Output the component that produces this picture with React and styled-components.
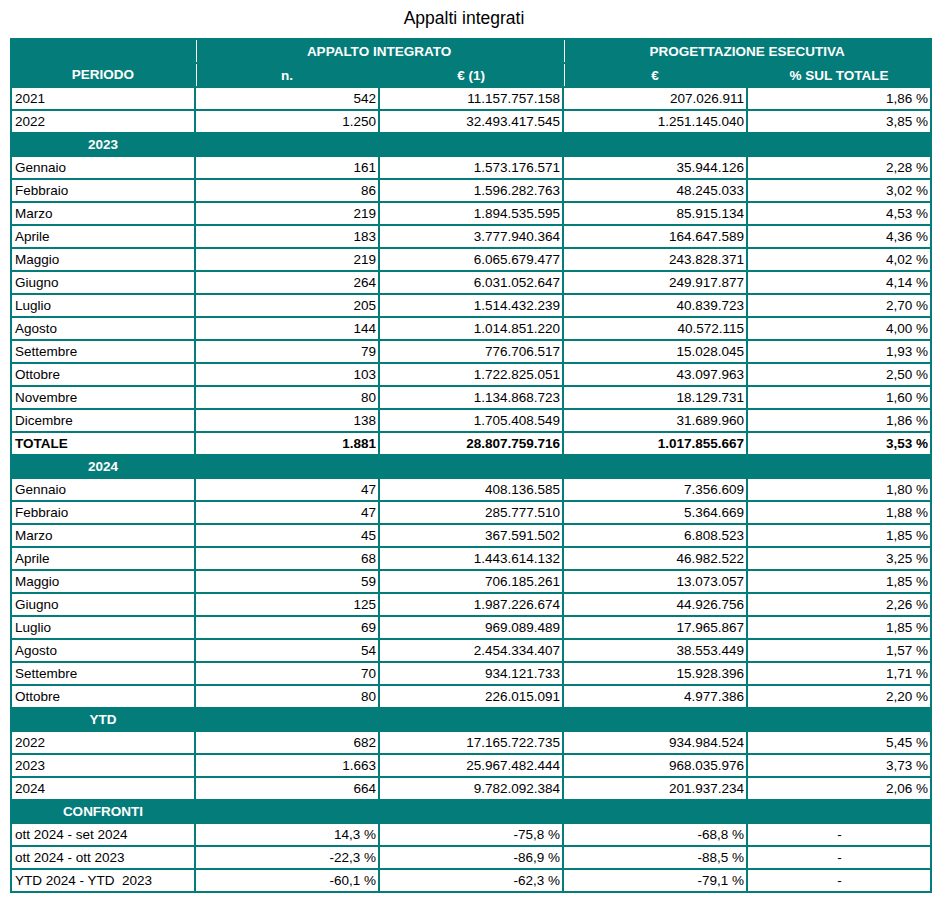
import React from 'react';
import styled, { createGlobalStyle } from 'styled-components';

const teal = '#047c79';

const GlobalStyle = createGlobalStyle`
  body {
    margin: 0;
    background: #fff;
    font-family: "Liberation Sans", Arial, sans-serif;
    color: #000;
  }
`;

const Page = styled.div`
  width: 939px;
  padding: 0 0 0 10px;
  box-sizing: border-box;
`;

const Title = styled.div`
  width: 908px;
  height: 38px;
  line-height: 36px;
  text-align: center;
  font-size: 17.5px;
`;

const Table = styled.table`
  border-collapse: collapse;
  table-layout: fixed;
  width: 922px;
  font-size: 13.5px;
`;

const HeadCell = styled.th`
  background: ${teal};
  color: #fff;
  font-weight: bold;
  font-size: 13.5px;
  height: 22px;
  padding: 0;
  text-align: center;
  vertical-align: ${({ $bottom }) => ($bottom ? 'bottom' : 'middle')};
  padding-bottom: ${({ $bottom }) => ($bottom ? '4px' : '0')};
  border: 2px solid ${teal};
  box-shadow: ${({ $line }) => ($line ? 'inset 1px 0 0 #fff' : 'none')};
`;

const Cell = styled.td`
  border: 2px solid ${teal};
  height: 21px;
  padding: 0 2px 0 3px;
  white-space: nowrap;
  overflow: hidden;
  text-align: ${({ $align }) => $align || 'right'};
  font-weight: ${({ $bold }) => ($bold ? 'bold' : 'normal')};
`;

const SectionCell = styled.td`
  background: ${teal};
  color: #fff;
  font-weight: bold;
  height: 21px;
  padding: 0;
  text-align: center;
  border: 2px solid ${teal};
`;

const header = { top: ['APPALTO INTEGRATO', 'PROGETTAZIONE ESECUTIVA'], sub: ['n.', '€ (1)', '€', '% SUL TOTALE'] };

const sections = [
  {
    rows: [
      ['2021', '542', '11.157.757.158', '207.026.911', '1,86 %'],
      ['2022', '1.250', '32.493.417.545', '1.251.145.040', '3,85 %'],
    ],
  },
  {
    title: '2023',
    rows: [
      ['Gennaio', '161', '1.573.176.571', '35.944.126', '2,28 %'],
      ['Febbraio', '86', '1.596.282.763', '48.245.033', '3,02 %'],
      ['Marzo', '219', '1.894.535.595', '85.915.134', '4,53 %'],
      ['Aprile', '183', '3.777.940.364', '164.647.589', '4,36 %'],
      ['Maggio', '219', '6.065.679.477', '243.828.371', '4,02 %'],
      ['Giugno', '264', '6.031.052.647', '249.917.877', '4,14 %'],
      ['Luglio', '205', '1.514.432.239', '40.839.723', '2,70 %'],
      ['Agosto', '144', '1.014.851.220', '40.572.115', '4,00 %'],
      ['Settembre', '79', '776.706.517', '15.028.045', '1,93 %'],
      ['Ottobre', '103', '1.722.825.051', '43.097.963', '2,50 %'],
      ['Novembre', '80', '1.134.868.723', '18.129.731', '1,60 %'],
      ['Dicembre', '138', '1.705.408.549', '31.689.960', '1,86 %'],
      ['TOTALE', '1.881', '28.807.759.716', '1.017.855.667', '3,53 %', true],
    ],
  },
  {
    title: '2024',
    rows: [
      ['Gennaio', '47', '408.136.585', '7.356.609', '1,80 %'],
      ['Febbraio', '47', '285.777.510', '5.364.669', '1,88 %'],
      ['Marzo', '45', '367.591.502', '6.808.523', '1,85 %'],
      ['Aprile', '68', '1.443.614.132', '46.982.522', '3,25 %'],
      ['Maggio', '59', '706.185.261', '13.073.057', '1,85 %'],
      ['Giugno', '125', '1.987.226.674', '44.926.756', '2,26 %'],
      ['Luglio', '69', '969.089.489', '17.965.867', '1,85 %'],
      ['Agosto', '54', '2.454.334.407', '38.553.449', '1,57 %'],
      ['Settembre', '70', '934.121.733', '15.928.396', '1,71 %'],
      ['Ottobre', '80', '226.015.091', '4.977.386', '2,20 %'],
    ],
  },
  {
    title: 'YTD',
    rows: [
      ['2022', '682', '17.165.722.735', '934.984.524', '5,45 %'],
      ['2023', '1.663', '25.967.482.444', '968.035.976', '3,73 %'],
      ['2024', '664', '9.782.092.384', '201.937.234', '2,06 %'],
    ],
  },
  {
    title: 'CONFRONTI',
    rows: [
      ['ott 2024 - set 2024', '14,3 %', '-75,8 %', '-68,8 %', '-'],
      ['ott 2024 - ott 2023', '-22,3 %', '-86,9 %', '-88,5 %', '-'],
      ['YTD 2024 - YTD\u00a0 2023', '-60,1 %', '-62,3 %', '-79,1 %', '-'],
    ],
  },
];

const DataRow = ({ row }) => {
  const [label, n, amount, prog, pct, bold] = row;
  return (
    <tr>
      <Cell $align="left" $bold={bold}>{label}</Cell>
      <Cell $bold={bold}>{n}</Cell>
      <Cell $bold={bold}>{amount}</Cell>
      <Cell $bold={bold}>{prog}</Cell>
      <Cell $bold={bold} $align={pct === '-' ? 'center' : 'right'}>{pct}</Cell>
    </tr>
  );
};

const App = () => (
  <Page>
    <GlobalStyle />
    <Title>Appalti integrati</Title>
    <Table>
      <colgroup>
        {[0, 1, 2, 3, 4].map((i) => (
          <col key={i} style={{ width: 184 }} />
        ))}
      </colgroup>
      <thead>
        <tr>
          <HeadCell rowSpan={2} $bottom>PERIODO</HeadCell>
          <HeadCell colSpan={2} $line>{header.top[0]}</HeadCell>
          <HeadCell colSpan={2} $line>{header.top[1]}</HeadCell>
        </tr>
        <tr>
          {header.sub.map((s, i) => (
            <HeadCell key={s} $line={i === 0 || i === 2}>{s}</HeadCell>
          ))}
        </tr>
      </thead>
      <tbody>
        {sections.map((sec, i) => (
          <React.Fragment key={i}>
            {sec.title && (
              <tr>
                <SectionCell>{sec.title}</SectionCell>
                <SectionCell colSpan={4} />
              </tr>
            )}
            {sec.rows.map((r, j) => (
              <DataRow key={j} row={r} />
            ))}
          </React.Fragment>
        ))}
      </tbody>
    </Table>
  </Page>
);

export default App;
